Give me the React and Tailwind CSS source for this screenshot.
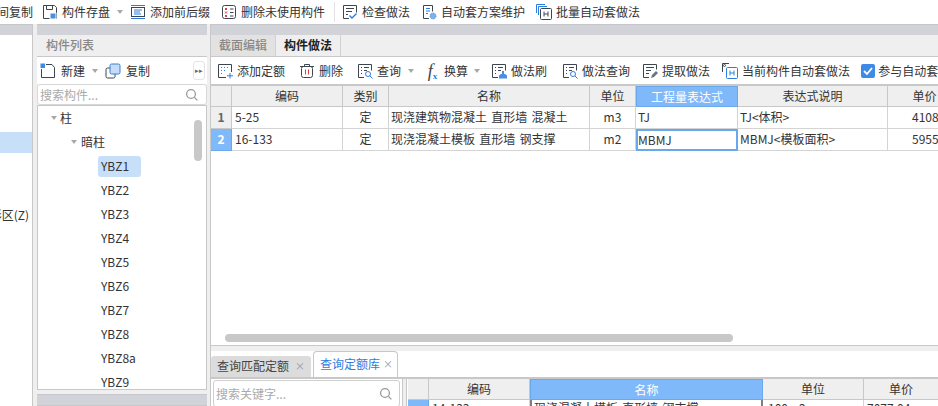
import React from 'react';

const ink = '#3c4650';
const blue = '#2d7de0';

const Svg = ({ children }) => (
    <svg width="16" height="16" viewBox="0 0 16 16" fill="none" stroke={ink} strokeWidth="1" className="shrink-0">
        {children}
    </svg>
);

const icons = {
    save: (
        <Svg>
            <path d="M1.5 1.5h11l2 2v11h-13z" />
            <path d="M4.5 1.5v4h6v-4" />
            <rect x="8" y="9" width="6" height="6" fill="#4a90e2" stroke="#fff" />
        </Svg>
    ),
    prefix: (
        <Svg>
            <path d="M1 1.5h14M1 14.5h14" stroke={blue} />
            <rect x="1.5" y="3.5" width="13" height="9" />
            <path d="M4 6h8M4 8h6M4 10h7" stroke={blue} />
        </Svg>
    ),
    unused: (
        <Svg>
            <rect x="1.5" y="1.5" width="13" height="13" rx="2" />
            <path d="M4 4l2 2M6 4l-2 2M4 7.5l2 2M6 7.5l-2 2M4 11l2 2M6 11l-2 2" stroke="#e03c3c" />
            <path d="M9 5h3.5M9 8.5h3.5M9 12h3.5" />
        </Svg>
    ),
    check: (
        <Svg>
            <path d="M7 14.5H1.5v-13h13v7" />
            <path d="M4 4.5h8M4 7.5h6M4 10.5h2" />
            <path d="M7.5 11.5l2.5 2.5 4.5-4.5" stroke={blue} strokeWidth="1.4" />
        </Svg>
    ),
    scheme: (
        <Svg>
            <path d="M8 14.5H2.5v-13h9v6" />
            <path d="M5 4.5h4M5 7h4M5 9.5h2" stroke={blue} />
            <circle cx="12" cy="12" r="3" fill="#7fb2ea" stroke="#4a90e2" strokeDasharray="1 1" />
        </Svg>
    ),
    batch: (
        <Svg>
            <path d="M.5 9V.5H9M2.5 11V2.5H11" stroke={blue} />
            <rect x="4.5" y="4.5" width="11" height="11" rx="1" />
            <path d="M8 7.5v5M12 7.5v5M8 10h4" />
        </Svg>
    ),
    create: (
        <Svg>
            <path d="M6 1.5h6l2.5 3v10h-13V6" />
            <rect x="0.5" y="0.5" width="4.5" height="4.5" fill="#3d8be6" stroke="none" />
        </Svg>
    ),
    copy: (
        <Svg>
            <rect x="1" y="5" width="9" height="10" rx="1.5" />
            <rect x="5" y="1" width="10" height="10" rx="1.5" fill="#c5dcf8" stroke="#3d7fd0" />
        </Svg>
    ),
    add: (
        <Svg>
            <path d="M9 14.5H1.5v-13h13V9" />
            <path d="M4 4.5h1M7 4.5h1M10 4.5h1M4 7.5h1M7 7.5h1M4 10.5h1" stroke={blue} />
            <path d="M13 10v5.5M10 12.8h6" stroke={blue} />
        </Svg>
    ),
    trash: (
        <Svg>
            <path d="M1 3.5h14M5.5 3.5v-2h5v2" />
            <rect x="2.5" y="3.5" width="11" height="11" rx="2" />
            <path d="M6.5 6.5v5M9.5 6.5v5" stroke="#e03c3c" />
        </Svg>
    ),
    query: (
        <Svg>
            <path d="M7 14.5H1.5v-13h13v6" />
            <path d="M4 4.5h1M7 4.5h5M4 7.5h1M7 7.5h3M4 10.5h1" />
            <circle cx="11" cy="11" r="2.5" stroke={blue} />
            <path d="M13 13l2.5 2.5" stroke={blue} />
        </Svg>
    ),
    brush: (
        <Svg>
            <path d="M7 14.5H1.5v-13h13v6" />
            <path d="M4 4.5h1M7 4.5h5M4 7.5h1M7 7.5h3M4 10.5h1" />
            <path d="M8 15.5v-3l2-1.5h4l2 1.5v3z" fill="#4a90e2" stroke="none" />
            <rect x="11" y="8" width="2" height="3" fill="#4a90e2" stroke="none" />
        </Svg>
    ),
    pick: (
        <Svg>
            <path d="M7 14.5H1.5v-13h13v5" />
            <path d="M4 4.5h8M4 7.5h5M4 10.5h3" />
            <path d="M9 15l1-3 4-4 2 2-4 4z" fill="#6b7480" stroke="none" />
        </Svg>
    ),
    current: (
        <Svg>
            <path d="M.5 9V.5H7" />
            <circle cx="2.5" cy="2.5" r="1" />
            <rect x="4.5" y="4.5" width="11" height="11" rx="1" stroke={blue} />
            <path d="M8 7.5v5M12 7.5v5M8 10h4" stroke={blue} />
        </Svg>
    ),
};

const Caret = ({ className = '' }) => (
    <span className={`w-0 h-0 border-x-[3px] border-x-transparent border-t-[4px] border-t-[#a8a8a8] ${className}`} />
);

const Tool = ({ icon, label, className = '', gap = 'gap-1' }) => (
    <div className={`flex items-center shrink-0 ${gap} ${className}`}>
        {icons[icon]}
        <span className="whitespace-nowrap">{label}</span>
    </div>
);

const Sep = ({ className = '' }) => <span className={`w-px h-[20px] bg-[#e2e2e2] shrink-0 ${className}`} />;

const Band = () => <div className="h-[11px] shrink-0 bg-[#d2d3d8] border-t border-[#c6c7cb]" />;

const SearchGlass = () => (
    <svg width="14" height="14" viewBox="0 0 14 14" fill="none" stroke="#9a9a9a" strokeWidth="1.3">
        <circle cx="6" cy="6" r="4.4" />
        <path d="M9.4 9.4l3 3" />
    </svg>
);

const TopBar = () => (
    <div className="h-[24px] shrink-0 bg-white flex items-center text-[#333] pb-px">
        <span className="w-[42px] shrink-0 overflow-hidden whitespace-nowrap flex justify-start">
            <span className="-ml-[3px]">间复制</span>
        </span>
        <Tool icon="save" label="构件存盘" />
        <Caret className="ml-[7px]" />
        <Tool icon="prefix" label="添加前后缀" className="ml-[7px]" />
        <Tool icon="unused" label="删除未使用构件" className="ml-[11px]" />
        <Sep className="ml-[9px]" />
        <Tool icon="check" label="检查做法" className="ml-[7px]" />
        <Tool icon="scheme" label="自动套方案维护" className="ml-[11px]" />
        <Tool icon="batch" label="批量自动套做法" className="ml-[11px]" />
    </div>
);

const LeftPanel = () => (
    <div className="w-[33px] shrink-0 flex flex-col border-r border-[#c8c8c8]">
        <Band />
        <div className="flex-1 bg-white pt-[97px] overflow-hidden">
            <div className="h-[21px] bg-[#c8dffa]" />
            <div className="mt-[52px] h-[20px] flex items-center justify-end pr-[3px] overflow-hidden whitespace-nowrap text-[#333]">
                形区(Z)
            </div>
        </div>
    </div>
);

const TreeRow = ({ className = '', children }) => (
    <div className={`h-[24px] flex items-center whitespace-nowrap ${className}`}>{children}</div>
);

const codes = ['YBZ1', 'YBZ2', 'YBZ3', 'YBZ4', 'YBZ5', 'YBZ6', 'YBZ7', 'YBZ8', 'YBZ8a', 'YBZ9', 'YBZ10'];

const MiddlePanel = () => (
    <div className="w-[170px] shrink-0 ml-[4px] flex flex-col">
        <Band />
        <div className="h-[22px] shrink-0 flex items-center pl-[9px] pb-[2px] text-[#888] font-medium border-b border-[#c8c8c8]">构件列表</div>
        <div className="h-[27px] shrink-0 bg-white flex items-center pl-[3px] text-[#333] relative">
            <Tool icon="create" label="新建" gap="gap-[5px]" />
            <Caret className="ml-[7px]" />
            <Tool icon="copy" label="复制" gap="gap-[5px]" className="ml-[7px]" />
            <span className="absolute right-[2px] top-[4px] w-[12px] h-[19px] border border-[#e4e4e4] rounded-[3px] flex items-center justify-center text-[7px] text-[#666]">▸▸</span>
        </div>
        <div className="h-[21px] shrink-0 bg-white border border-[#d8d8d8] rounded-[3px] flex items-center justify-between px-[2px] pr-[7px] text-[#aaa]">
            <span>搜索构件...</span>
            <SearchGlass />
        </div>
        <div className="h-[285px] shrink-0 bg-white border border-[#c8c8c8] overflow-hidden relative text-[#333]">
            <TreeRow className="pl-[13px]">
                <Caret className="border-t-[#888] border-x-[3.5px]" />
                <span className="ml-[3px]">柱</span>
            </TreeRow>
            <TreeRow className="pl-[33px]">
                <Caret className="border-t-[#888] border-x-[3.5px]" />
                <span className="ml-[4px]">暗柱</span>
            </TreeRow>
            {codes.map((code, i) => (
                <TreeRow key={code} className="pl-[60px]">
                    <span className={`h-[21px] w-[43px] flex items-center pl-[3px] rounded-[3px] ${i === 0 ? 'bg-[#c8dffa]' : ''}`}>{code}</span>
                </TreeRow>
            ))}
            <span className="absolute left-[156px] top-[14px] w-[8px] h-[41px] rounded-full bg-[#c8c8c8]" />
        </div>
        <div className="mt-[4px] flex-1 flex flex-col">
            <Band />
            <div className="flex-1 bg-white border-t border-[#c8c8c8]" />
        </div>
    </div>
);

const mainCols = 'grid grid-cols-[21px_111px_46px_201px_46px_102px_150px_74px]';

const HeadCell = ({ active, children }) => (
    <div className={`h-[21px] flex items-center justify-center ${active ? 'bg-[#7fb9fa] text-white border border-[#6aa8ec]' : 'bg-[#efefef] text-[#333] border-r border-b border-[#c8c8c8]'}`}>
        {children}
    </div>
);

const Cell = ({ className = '', height = 'h-[22px] pb-px', children }) => (
    <div className={`${height} flex items-center border-r border-b border-[#d4d4d4] bg-white text-[#333] whitespace-nowrap overflow-hidden ${className}`}>
        {children}
    </div>
);

const rows = [
    ['1', '5-25', '定', '现浇建筑物混凝土 直形墙 混凝土', 'm3', 'TJ', 'TJ<体积>', '4108'],
    ['2', '16-133', '定', '现浇混凝土模板 直形墙 钢支撑', 'm2', 'MBMJ', 'MBMJ<模板面积>', '5955'],
];

const Tabs = () => (
    <div className="h-[22px] shrink-0 flex border-b border-[#c8c8c8]">
        <div className="w-[65px] flex items-center justify-center pb-[2px] bg-[#e2e2e2] text-[#888] font-medium border-r border-[#d2d2d2]">截面编辑</div>
        <div className="w-[65px] flex items-center justify-center pb-[2px] text-[#222] font-semibold border-r border-[#d2d2d2]">构件做法</div>
    </div>
);

const RightToolbar = () => (
    <div className="h-[27px] shrink-0 bg-white flex items-center pl-[6px] text-[#333] overflow-hidden">
        <Tool icon="add" label="添加定额" />
        <Tool icon="trash" label="删除" className="ml-[14px]" />
        <Tool icon="query" label="查询" className="ml-[14px]" />
        <Caret className="ml-[7px]" />
        <div className="ml-[11px] w-[15px] text-center font-['Liberation_Serif',serif] italic text-[18px] leading-none text-[#444] shrink-0">
            f<sub className="text-[9px] text-[#2d7de0] not-italic font-bold">x</sub>
        </div>
        <span className="ml-[4px] shrink-0">换算</span>
        <Caret className="ml-[6px]" />
        <Tool icon="brush" label="做法刷" className="ml-[11px]" />
        <Tool icon="query" label="做法查询" className="ml-[15px]" />
        <Tool icon="pick" label="提取做法" className="ml-[12px]" />
        <Tool icon="current" label="当前构件自动套做法" className="ml-[12px]" />
        <span className="ml-[11px] w-[14px] h-[14px] rounded-[2px] bg-[#3d8be6] shrink-0 flex items-center justify-center">
            <svg width="12" height="12" viewBox="0 0 12 12" fill="none" stroke="#fff" strokeWidth="1.8">
                <path d="M2 6l3 3 5-6" />
            </svg>
        </span>
        <span className="ml-[3px] whitespace-nowrap">参与自动套</span>
    </div>
);

const MainTable = () => (
    <div className="flex-1 bg-white relative overflow-hidden border-b border-[#c8c8c8] border-t-2 border-t-[#c8c8c8]">
        <div className={mainCols}>
            <HeadCell />
            <HeadCell>编码</HeadCell>
            <HeadCell>类别</HeadCell>
            <HeadCell>名称</HeadCell>
            <HeadCell>单位</HeadCell>
            <HeadCell active>工程量表达式</HeadCell>
            <HeadCell>表达式说明</HeadCell>
            <HeadCell>单价</HeadCell>
            {rows.map((r, i) => (
                <React.Fragment key={r[0]}>
                    <div className={`h-[22px] pb-px flex items-center justify-center border-r border-b font-semibold ${i === 1 ? 'bg-[#7fb9fa] text-white border-[#6aa8ec]' : 'bg-[#efefef] text-[#666] border-[#c8c8c8]'}`}>{r[0]}</div>
                    <Cell className="pl-[3px]">{r[1]}</Cell>
                    <Cell className="justify-center">{r[2]}</Cell>
                    <Cell className="pl-[2px] [word-spacing:1.5px]">{r[3]}</Cell>
                    <Cell className="justify-center">{r[4]}</Cell>
                    {i === 1 ? (
                        <div className="h-[22px] pb-px flex items-center bg-white text-[#333] border-2 border-[#6aa8ec]">{r[5]}</div>
                    ) : (
                        <Cell className="pl-[2px]">{r[5]}</Cell>
                    )}
                    <Cell className="pl-[2px]">{r[6]}</Cell>
                    <Cell className="pl-[24px] border-r-0">{r[7]}</Cell>
                </React.Fragment>
            ))}
        </div>
        <span className="absolute left-[14px] bottom-[3px] w-[508px] h-[8px] rounded-full bg-[#c8c8c8]" />
    </div>
);

const lowCols = 'grid grid-cols-[21px_101px_233px_101px_75px]';

const LowerPanel = () => (
    <div className="h-[55px] shrink-0 mt-[5px] bg-white flex flex-col">
        <div className="h-[26px] shrink-0 flex items-end">
            <div className="w-[100px] h-[21px] pb-px bg-[#dcdcdc] rounded-t-[3px] flex items-center pl-[6px] gap-[6px] text-[#444]">
                查询匹配定额
                <span className="text-[#999] text-[10px]">×</span>
            </div>
            <div className="ml-[2px] w-[85px] h-[26px] pb-px bg-white border border-b-0 border-[#c8c8c8] rounded-t-[4px] flex items-center pl-[6px] gap-[3px] text-[#2d7de0]">
                查询定额库
                <span className="text-[#999] text-[10px]">×</span>
            </div>
        </div>
        <div className="flex-1 flex border-t-2 border-[#c8c8c8] overflow-hidden">
            <div className="w-[191px] shrink-0 pl-[2px] pr-[2px] pt-px">
                <div className="h-[27px] bg-white border border-[#d0d0d0] rounded-[3px] flex items-center justify-between pl-[2px] pr-[6px] text-[#aaa]">
                    <span>搜索关键字...</span>
                    <SearchGlass />
                </div>
            </div>
            <div className="w-[5px] shrink-0 bg-[#efefef] border-x border-[#c8c8c8]" />
            <div className="flex-1 overflow-hidden pl-px">
                <div className={lowCols}>
                    <HeadCell />
                    <HeadCell>编码</HeadCell>
                    <HeadCell active>名称</HeadCell>
                    <HeadCell>单位</HeadCell>
                    <HeadCell>单价</HeadCell>
                    <div className="h-[16px] bg-[#7fb9fa] border-r border-[#6aa8ec]" />
                    <Cell height="h-[16px]" className="pl-[3px]">14-133</Cell>
                    <div className="h-[16px] bg-white border-x-2 border-[#808080] text-[#333] flex items-center pl-[2px] whitespace-nowrap overflow-hidden [word-spacing:1.5px]">现浇混凝土模板 直形墙 钢支撑</div>
                    <Cell height="h-[16px]" className="pl-[5px]">100m2</Cell>
                    <Cell height="h-[16px]" className="pl-[3px] border-r-0">7077.04</Cell>
                </div>
            </div>
        </div>
    </div>
);

const RightPanel = () => (
    <div className="flex-1 min-w-0 ml-[3px] flex flex-col border-l border-[#c8c8c8]">
        <Band />
        <Tabs />
        <RightToolbar />
        <MainTable />
        <LowerPanel />
    </div>
);

const App = () => (
    <div className="w-[938px] h-[406px] overflow-hidden flex flex-col bg-[#efefef] text-[12px] leading-none font-['Noto_Sans_CJK_SC','Noto_Sans',sans-serif]">
        <TopBar />
        <div className="flex-1 min-h-0 flex">
            <LeftPanel />
            <MiddlePanel />
            <RightPanel />
        </div>
    </div>
);

export default App;
